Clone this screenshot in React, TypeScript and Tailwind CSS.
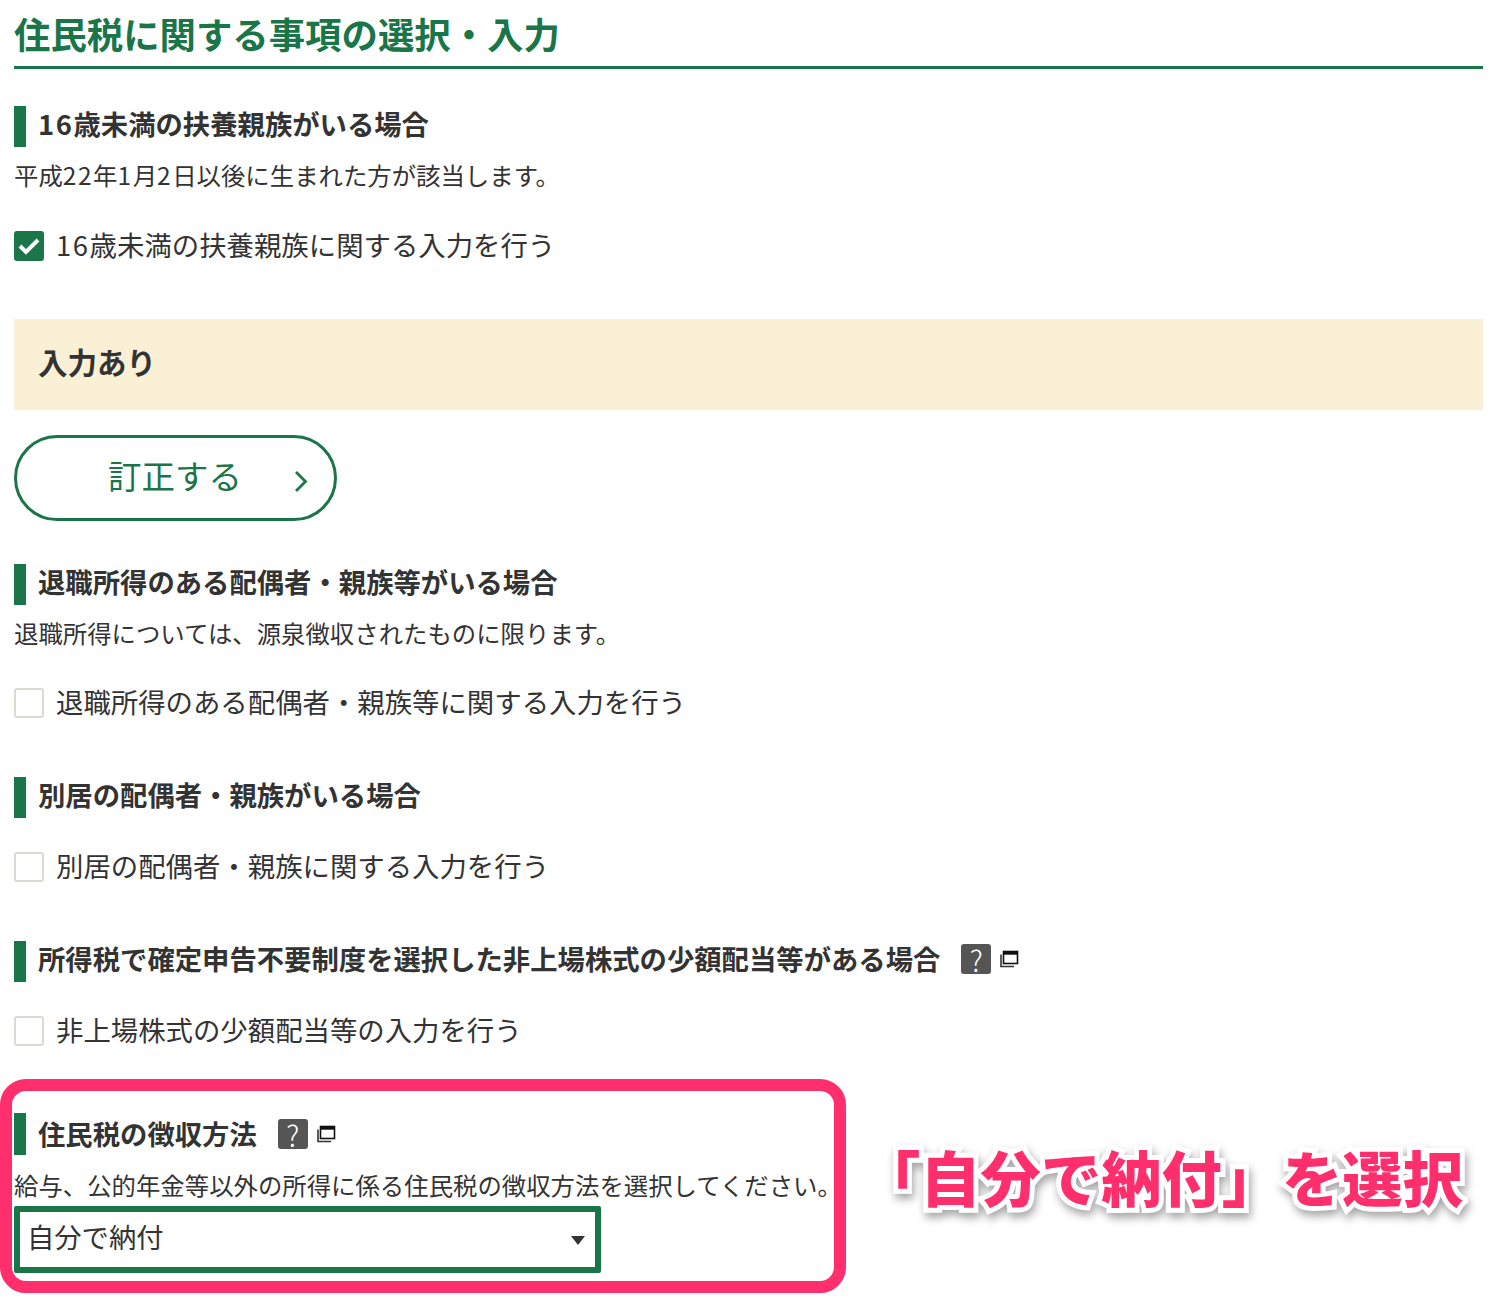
import React from "react";

const FONT = "font-['Noto_Sans_CJK_JP','Noto_Sans',sans-serif]";

function Num({ children }: { children: React.ReactNode }) {
  return <span className="tracking-[1.6px]">{children}</span>;
}

function Help() {
  return (
    <span className="inline-flex items-center ml-[21px] gap-[8px]">
      <span className="w-[30px] h-[30px] rounded-[3px] bg-[#555555] text-white flex items-center justify-center text-[29px] font-light leading-none">?</span>
      <svg width="20" height="20" viewBox="0 0 20 20">
        <path d="M2 5.5V17.5H15" fill="none" stroke="#333" strokeWidth="1.6" />
        <rect x="4.5" y="2.5" width="14" height="12" fill="#fff" stroke="#111" strokeWidth="1.6" />
        <rect x="4.5" y="2.5" width="14" height="3.2" fill="#111" />
      </svg>
    </span>
  );
}

function SubHeading({ children, help, className }: { children: React.ReactNode; help?: boolean; className?: string }) {
  return (
    <div className={`flex items-center border-l-[12px] border-[#1a7548] pl-[12px] text-[27.35px] font-bold text-[#333333] leading-none ${className ?? "h-[41px] pb-[5px]"}`}>
      <span>{children}</span>
      {help && <Help />}
    </div>
  );
}

function Check({ label, checked, className }: { label: React.ReactNode; checked?: boolean; className?: string }) {
  return (
    <div className={`flex items-center h-[30px] gap-[12px] text-[27.4px] text-[#333333] leading-none ${className ?? ""}`}>
      {checked ? (
        <span className="w-[30px] h-[30px] rounded-[3px] bg-[#1a7548] shrink-0">
          <svg width="30" height="30" viewBox="0 0 30 30">
            <path d="M6 15L12 21L24 9" fill="none" stroke="#fff" strokeWidth="4" />
          </svg>
        </span>
      ) : (
        <span className="w-[30px] h-[30px] rounded-[3px] bg-white border-2 border-[#dcdad4] shrink-0" />
      )}
      <span className="-mt-[2px]">{label}</span>
    </div>
  );
}

function Body({ children, className }: { children: React.ReactNode; className?: string }) {
  return <p className={`text-[24.4px] h-[34px] leading-[34px] text-[#333333] whitespace-nowrap ${className ?? ""}`}>{children}</p>;
}

export default function App() {
  return (
    <div className={`relative w-[1500px] h-[1300px] bg-white overflow-hidden ${FONT}`}>
      <div className="pl-[14px] pr-[17px]">
        <h1 className="h-[69px] pt-[10px] border-b-[3px] border-[#1a7548] text-[36.4px] leading-[46px] font-bold text-[#1a7548]">
          住民税に関する事項の選択・入力
        </h1>

        <SubHeading className="h-[41px] pb-[5px] mt-[37px]"><Num>16</Num>歳未満の扶養親族がいる場合</SubHeading>
        <Body className="mt-[11px]">平成<Num>22</Num>年<Num>1</Num>月<Num>2</Num>日以後に生まれた方が該当します。</Body>
        <Check className="mt-[39px]" checked label={<><Num>16</Num>歳未満の扶養親族に関する入力を行う</>} />

        <div className="mt-[58px] h-[91px] pb-[6px] bg-[#f9f0d6] flex items-center pl-[24px] text-[29.5px] font-bold text-[#333333]">
          入力あり
        </div>

        <button className="mt-[25px] relative block w-[323px] h-[86px] rounded-full border-[3px] border-[#1a7548] bg-white text-[#1a7548] text-[33.5px]">
          <span className="absolute left-[91px] top-[14px] leading-[46px]">訂正する</span>
          <svg width="16" height="24" viewBox="0 0 16 24" className="absolute left-[276px] top-[31px]">
            <path d="M3 3L12.5 12.5L3 22" fill="none" stroke="#1a7548" strokeWidth="2.8" />
          </svg>
        </button>

        <SubHeading className="h-[41px] pb-[5px] mt-[43px]">退職所得のある配偶者・親族等がいる場合</SubHeading>
        <Body className="mt-[11px]">退職所得については、源泉徴収されたものに限ります。</Body>
        <Check className="mt-[38px]" label="退職所得のある配偶者・親族等に関する入力を行う" />

        <SubHeading className="h-[41px] pb-[5px] mt-[59px]">別居の配偶者・親族がいる場合</SubHeading>
        <Check className="mt-[34px]" label="別居の配偶者・親族に関する入力を行う" />

        <SubHeading className="h-[41px] pb-[5px] mt-[59px]" help>所得税で確定申告不要制度を選択した非上場株式の少額配当等がある場合</SubHeading>
        <Check className="mt-[34px]" label="非上場株式の少額配当等の入力を行う" />

        <SubHeading className="h-[42px] mt-[67px]" help>住民税の徴収方法</SubHeading>
        <Body className="mt-[13px]">給与、公的年金等以外の所得に係る住民税の徴収方法を選択してください。</Body>
        <div className="mt-[4px] relative w-[587px] h-[67px] border-[6px] border-[#1a7548] rounded-[2px] bg-white flex items-center pl-[7px] pb-[6px] text-[27.3px] text-[#333333]">
          <span>自分で納付</span>
          <span className="absolute right-[10px] top-[24px] w-0 h-0 border-x-[7px] border-x-transparent border-t-[9px] border-t-[#333333]" />
        </div>
      </div>

      <div className="absolute left-0 top-[1079px] w-[846px] h-[214px] border-[12px] border-[#ff2f6d] rounded-[26px] pointer-events-none" />
      <div className="absolute left-[860px] top-[1136px] text-[60.3px] leading-[80px] font-black text-[#ff2f6d] whitespace-nowrap [paint-order:stroke_fill] [-webkit-text-stroke:10px_#ffffff] [filter:drop-shadow(2px_5px_4px_rgba(0,0,0,0.35))]">
        「自分で納付」を選択
      </div>
    </div>
  );
}
